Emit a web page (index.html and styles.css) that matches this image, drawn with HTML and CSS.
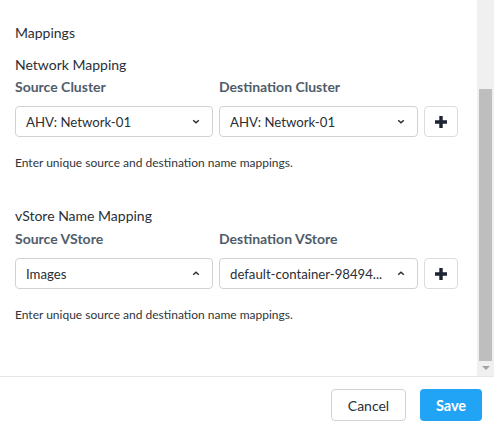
FILE: index.html
```html
<!DOCTYPE html>
<html>
<head>
<meta charset="utf-8">
<link rel="stylesheet" href="styles.css">
</head>
<body>
<div class="modal">
  <div class="scroll-area">
    <div class="content">
      <div class="title">Mappings</div>

      <section class="mapping">
        <div class="section-title">Network Mapping</div>
        <div class="row labels">
          <div class="col">Source Cluster</div>
          <div class="col">Destination Cluster</div>
        </div>
        <div class="row fields">
          <div class="select"><span class="value">AHV: Network-01</span><svg class="chev" width="8" height="5" viewBox="0 0 8 5"><path d="M1.2 1.2 L4 3.8 L6.8 1.2" fill="none" stroke="#2b2f36" stroke-width="1.5"/></svg></div>
          <div class="select"><span class="value">AHV: Network-01</span><svg class="chev" width="8" height="5" viewBox="0 0 8 5"><path d="M1.2 1.2 L4 3.8 L6.8 1.2" fill="none" stroke="#2b2f36" stroke-width="1.5"/></svg></div>
          <button class="add"><svg width="12" height="12" viewBox="0 0 12 12"><path d="M4.3 0h3.4v4.3H12v3.4H7.7V12H4.3V7.7H0V4.3h4.3z" fill="#1b2430"/></svg></button>
        </div>
        <div class="help">Enter unique source and destination name mappings.</div>
      </section>

      <section class="mapping second">
        <div class="section-title">vStore Name Mapping</div>
        <div class="row labels">
          <div class="col">Source VStore</div>
          <div class="col">Destination VStore</div>
        </div>
        <div class="row fields">
          <div class="select"><span class="value">Images</span><svg class="chev" width="8" height="5" viewBox="0 0 8 5"><path d="M1.2 3.8 L4 1.2 L6.8 3.8" fill="none" stroke="#2b2f36" stroke-width="1.5"/></svg></div>
          <div class="select"><span class="value">default-container-98494...</span><svg class="chev" width="8" height="5" viewBox="0 0 8 5"><path d="M1.2 3.8 L4 1.2 L6.8 3.8" fill="none" stroke="#2b2f36" stroke-width="1.5"/></svg></div>
          <button class="add"><svg width="12" height="12" viewBox="0 0 12 12"><path d="M4.3 0h3.4v4.3H12v3.4H7.7V12H4.3V7.7H0V4.3h4.3z" fill="#1b2430"/></svg></button>
        </div>
        <div class="help">Enter unique source and destination name mappings.</div>
      </section>
    </div>
    <div class="scrollbar">
      <div class="thumb"></div>
      <div class="arrow"></div>
    </div>
  </div>
  <div class="footer">
    <button class="btn cancel">Cancel</button>
    <button class="btn save">Save</button>
  </div>
</div>
</body>
</html>
```
FILE: styles.css
```css
html, body {
  margin: 0;
  padding: 0;
  background: #fff;
}
body {
  font-family: "Lato", "Open Sans", sans-serif;
  color: #2a2f36;
  width: 494px;
  height: 428px;
  overflow: hidden;
}
.modal {
  display: flex;
  flex-direction: column;
  height: 428px;
}
.scroll-area {
  display: flex;
  height: 376px;
  border-bottom: 1px solid #e6e6e6;
}
.content {
  flex: 1;
  padding: 24px 19px 0 15px;
}
.title {
  font-size: 14px;
  line-height: 18px;
}
.mapping {
  margin-top: 14px;
}
.mapping.second {
  margin-top: 37px;
}
.section-title {
  font-size: 14px;
  line-height: 18px;
}
.row {
  display: flex;
  gap: 6px;
}
.labels {
  margin-top: 4px;
  font-size: 14px;
  font-weight: 700;
  color: #4f5d6b;
  line-height: 18px;
}
.second .labels {
  margin-top: 5px;
}
.labels .col {
  width: 198px;
}
.fields {
  margin-top: 10px;
  align-items: center;
}
.select {
  box-sizing: border-box;
  width: 198px;
  height: 31px;
  border: 1px solid #cfd3d8;
  border-radius: 4px;
  display: flex;
  align-items: center;
  justify-content: space-between;
  padding: 0 12px 0 10px;
  font-size: 13.2px;
}
.select + .select {
  width: 199px;
}
.chev {
  display: block;
}
.add {
  box-sizing: border-box;
  width: 34px;
  height: 31px;
  border: 1px solid #d9dde1;
  border-radius: 4px;
  background: #fff;
  display: flex;
  align-items: center;
  justify-content: center;
  padding: 0;
}
.help {
  margin-top: 19px;
  font-size: 12px;
  line-height: 14px;
  color: #2f353c;
}
.scrollbar {
  width: 17px;
  background: #f0f0f0;
  display: flex;
  flex-direction: column;
  align-items: center;
}
.thumb {
  margin-top: 89px;
  width: 13px;
  height: 272px;
  background: #bebebe;
}
.arrow {
  margin-top: 5px;
  width: 0;
  height: 0;
  border-left: 4px solid transparent;
  border-right: 4px solid transparent;
  border-top: 4px solid #a3a3a3;
}
.footer {
  display: flex;
  justify-content: flex-end;
  gap: 14px;
  padding: 12px 12px 0 0;
}
.btn {
  box-sizing: border-box;
  height: 32px;
  border-radius: 4px;
  font-family: "Lato", "Open Sans", sans-serif;
  font-size: 14px;
  padding: 0;
}
.cancel {
  width: 75px;
  border: 1px solid #cfd3d8;
  background: #fff;
  color: #2a2f36;
}
.save {
  width: 62px;
  border: none;
  background: #22a4f6;
  color: #fff;
  font-weight: 700;
  font-size: 14.5px;
}
```
